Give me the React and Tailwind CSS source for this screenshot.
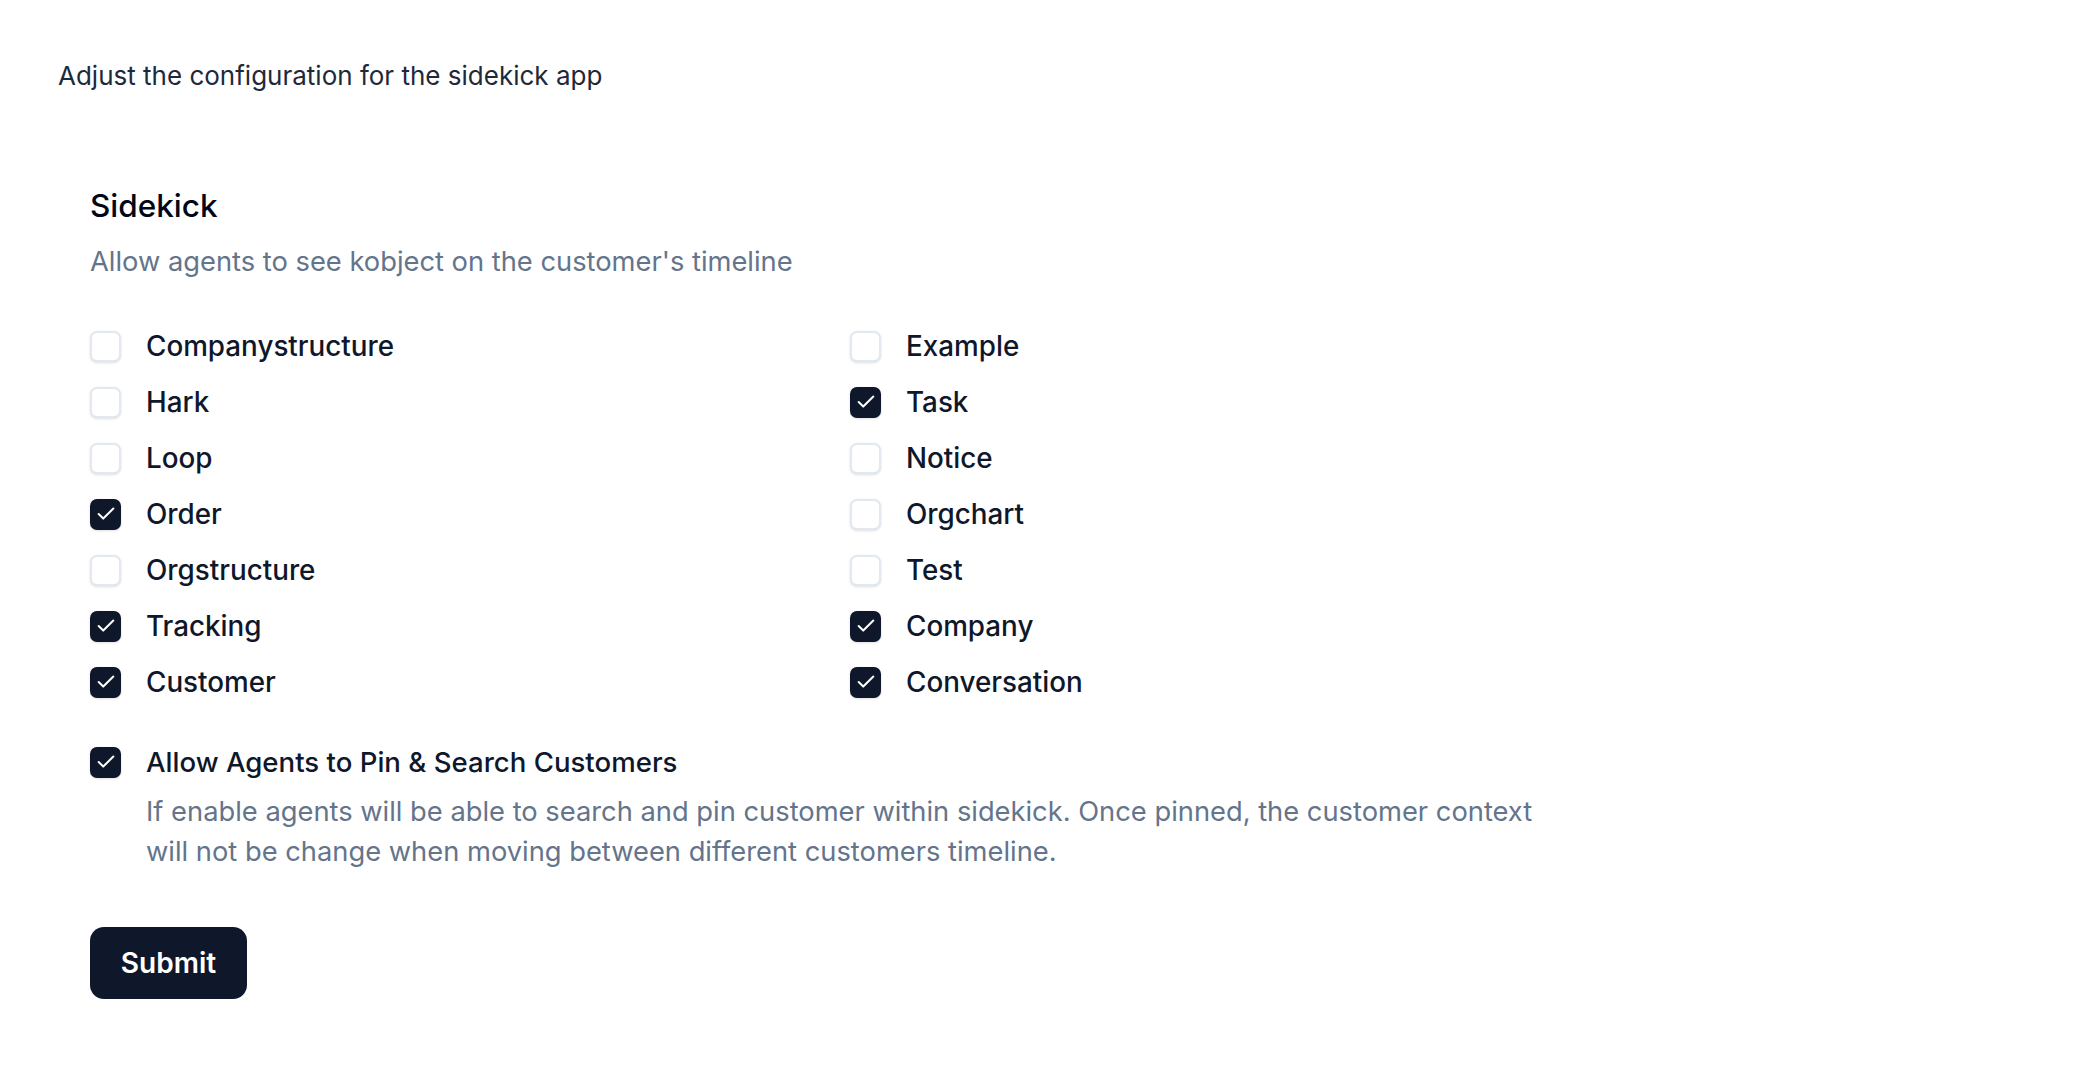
import { Check } from 'lucide-react'

const OBJECTS = [
  { label: 'Companystructure', checked: false },
  { label: 'Example', checked: false },
  { label: 'Hark', checked: false },
  { label: 'Task', checked: true },
  { label: 'Loop', checked: false },
  { label: 'Notice', checked: false },
  { label: 'Order', checked: true },
  { label: 'Orgchart', checked: false },
  { label: 'Orgstructure', checked: false },
  { label: 'Test', checked: false },
  { label: 'Tracking', checked: true },
  { label: 'Company', checked: true },
  { label: 'Customer', checked: true },
  { label: 'Conversation', checked: true },
]

function Box({ checked }) {
  if (checked) {
    return (
      <span className="flex items-center justify-center w-[31px] h-[31px] shrink-0 rounded-[7px] bg-[#0f172a] shadow-sm">
        <Check size={22} strokeWidth={2.2} className="text-white" />
      </span>
    )
  }
  return (
    <span className="block w-[31px] h-[31px] shrink-0 rounded-[7px] border-2 border-[#e2e8f0] bg-white shadow-sm" />
  )
}

export default function App() {
  return (
    <div className="min-h-screen bg-white pl-[58px] pt-[59px] font-['Inter',sans-serif] text-[#0f172a]">
      <p className="text-[26px] leading-[34px] text-[#1e293b]">Adjust the configuration for the sidekick app</p>

      <div className="pl-[32px] mt-[91px]">
        <h2 className="text-[31.5px] leading-[44px] font-medium text-[#020617]">Sidekick</h2>
        <p className="mt-[14px] text-[27.3px] leading-[40px] text-[#64748b]">
          Allow agents to see kobject on the customer's timeline
        </p>

        <div className="mt-[36px] grid grid-cols-2 w-[1520px]">
          {OBJECTS.map((o) => (
            <label key={o.label} className="flex items-center h-[56px] gap-[25px]">
              <Box checked={o.checked} />
              <span className="text-[27.8px] leading-[40px] font-medium">{o.label}</span>
            </label>
          ))}
        </div>

        <div className="mt-[32px] flex gap-[25px]">
          <div className="h-[40px] flex items-center">
            <Box checked />
          </div>
          <div className="flex flex-col">
            <span className="text-[27.6px] leading-[40px] font-medium">Allow Agents to Pin &amp; Search Customers</span>
            <p className="mt-[10px] max-w-[1410px] text-[27.3px] leading-[39.5px] text-[#64748b]">
              If enable agents will be able to search and pin customer within sidekick. Once pinned, the customer context will not be change when moving between different customers timeline.
            </p>
          </div>
        </div>

        <button className="mt-[56px] w-[157px] h-[72px] rounded-[14px] bg-[#0f172a] text-white text-[28px] font-semibold flex items-center justify-center">
          Submit
        </button>
      </div>
    </div>
  )
}
